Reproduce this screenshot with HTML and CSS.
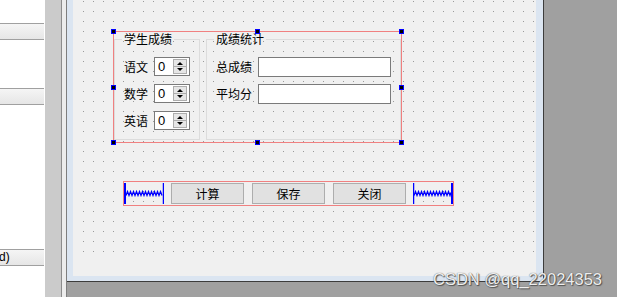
FILE: index.html
```html
<!DOCTYPE html>
<html>
	<head>
		<meta charset="UTF-8">
		<title>成绩窗体设计</title>
		<link rel="stylesheet" href="styles.css">
	</head>
	<body>
		<div class="side">
			<div class="side-bar bar-1"></div>
			<div class="side-bar bar-2"></div>
			<div class="side-bar bar-3">d)</div>
		</div>
		<div class="splitter"></div>
		<div class="scroll-edge"></div>
		<div class="mdi">
			<div class="subwindow">
				<div class="frame">
					<div class="form">
						<!-- 上面的水平布局: 两个分组框 -->
						<div class="layout layout-groups">
							<fieldset class="group group-scores">
								<legend>学生成绩</legend>
								<div class="row">
									<span class="label">语文</span>
									<span class="spin"><span class="spin-value">0</span><svg class="spin-btn" width="14" height="15" viewBox="0 0 14 15"><rect x="0.5" y="0.5" width="13" height="14" fill="#e6e6e6" stroke="#adadad"/><line x1="1" y1="7.5" x2="13" y2="7.5" stroke="#adadad"/><path d="M4 6 L7 3 L10 6 Z" fill="#000"/><path d="M4 9 L10 9 L7 12 Z" fill="#000"/></svg></span>
								</div>
								<div class="row">
									<span class="label">数学</span>
									<span class="spin"><span class="spin-value">0</span><svg class="spin-btn" width="14" height="15" viewBox="0 0 14 15"><rect x="0.5" y="0.5" width="13" height="14" fill="#e6e6e6" stroke="#adadad"/><line x1="1" y1="7.5" x2="13" y2="7.5" stroke="#adadad"/><path d="M4 6 L7 3 L10 6 Z" fill="#000"/><path d="M4 9 L10 9 L7 12 Z" fill="#000"/></svg></span>
								</div>
								<div class="row">
									<span class="label">英语</span>
									<span class="spin"><span class="spin-value">0</span><svg class="spin-btn" width="14" height="15" viewBox="0 0 14 15"><rect x="0.5" y="0.5" width="13" height="14" fill="#e6e6e6" stroke="#adadad"/><line x1="1" y1="7.5" x2="13" y2="7.5" stroke="#adadad"/><path d="M4 6 L7 3 L10 6 Z" fill="#000"/><path d="M4 9 L10 9 L7 12 Z" fill="#000"/></svg></span>
								</div>
							</fieldset>
							<fieldset class="group group-stats">
								<legend>成绩统计</legend>
								<div class="row row-edit">
									<span class="label label-wide">总成绩</span>
									<span class="edit"></span>
								</div>
								<div class="row row-edit">
									<span class="label label-wide">平均分</span>
									<span class="edit"></span>
								</div>
							</fieldset>
							<!-- 选中时的8个拖拽点 -->
							<span class="handle h-tl"></span>
							<span class="handle h-tm"></span>
							<span class="handle h-tr"></span>
							<span class="handle h-ml"></span>
							<span class="handle h-mr"></span>
							<span class="handle h-bl"></span>
							<span class="handle h-bm"></span>
							<span class="handle h-br"></span>
						</div>
						<!-- 下面的按钮布局 -->
						<div class="layout layout-buttons">
							<svg class="spacer" width="40" height="23" viewBox="0 0 40 23"><line x1="1" y1="1" x2="1" y2="22" stroke="#0000ff" stroke-width="2"/><line x1="39.5" y1="1" x2="39.5" y2="22" stroke="#0000ff" stroke-width="1.5"/><polyline points="2,13.5 3.5,9.5 5,13.5 6.5,9.5 8,13.5 9.5,9.5 11,13.5 12.5,9.5 14,13.5 15.5,9.5 17,13.5 18.5,9.5 20,13.5 21.5,9.5 23,13.5 24.5,9.5 26,13.5 27.5,9.5 29,13.5 30.5,9.5 32,13.5 33.5,9.5 35,13.5 36.5,9.5 38,13.5" fill="none" stroke="#0000ff" stroke-width="1.3"/></svg>
							<button class="btn btn-first">计算</button>
							<button class="btn">保存</button>
							<button class="btn">关闭</button>
							<svg class="spacer spacer-right" width="40" height="23" viewBox="0 0 40 23"><line x1="0.5" y1="1" x2="0.5" y2="22" stroke="#0000ff" stroke-width="1.5"/><line x1="39" y1="1" x2="39" y2="22" stroke="#0000ff" stroke-width="2"/><polyline points="1,13.5 2.5,9.5 4,13.5 5.5,9.5 7,13.5 8.5,9.5 10,13.5 11.5,9.5 13,13.5 14.5,9.5 16,13.5 17.5,9.5 19,13.5 20.5,9.5 22,13.5 23.5,9.5 25,13.5 26.5,9.5 28,13.5 29.5,9.5 31,13.5 32.5,9.5 34,13.5 35.5,9.5 37,13.5 38,10.5" fill="none" stroke="#0000ff" stroke-width="1.3"/></svg>
						</div>
					</div>
				</div>
			</div>
		</div>
		<div class="watermark">CSDN @qq_22024353</div>
	</body>
</html>
```

FILE: styles.css
```css
* {
	padding: 0;
	margin: 0;
	box-sizing: border-box;
}
html,body {
	height: 100%;
}
body {
	display: flex;
	height: 297px;
	overflow: hidden;
	background: #fff;
	font-family: "Noto Sans CJK SC", "Liberation Sans", sans-serif;
	font-size: 12px;
	color: #000;
}
/* 左边的属性面板 */
.side {
	width: 45px;
	flex-shrink: 0;
	background: #fff;
}
.side-bar {
	width: 44px;
	height: 17px;
	border-top: 1px solid #a0a0a0;
	border-bottom: 1px solid #a0a0a0;
	background: linear-gradient(#f5f5f5, #e6e6e6);
	font-family: "Liberation Sans", sans-serif;
	line-height: 15px;
	overflow: hidden;
}
.bar-1 {
	margin-top: 23px;
}
.bar-2 {
	margin-top: 48px;
}
.bar-3 {
	margin-top: 144px;
	text-indent: -1px;
}
.splitter {
	width: 16px;
	flex-shrink: 0;
	background: #cbcbcb;
}
.scroll-edge {
	width: 6px;
	flex-shrink: 0;
	border-left: 1px solid #8c8c8c;
	border-right: 1px solid #7e7e7e;
	background: #ececec;
}
.mdi {
	flex: 1;
	background: #a0a0a0;
}
.subwindow {
	width: 477px;
	height: 282px;
	border-right: 1px solid #3c3c3c;
	border-bottom: 1px solid #3c3c3c;
}
.frame {
	border-style: solid;
	border-color: #dbe5f1;
	border-width: 0 7px 5px 6px;
}
/* 设计器的网格点 */
.form {
	width: 463px;
	height: 276px;
	padding: 1px 2px 24px 10px;
	background: conic-gradient(at 1px 1px, transparent 270deg, #9a9a9a 0) 0 0 / 10px 10px content-box, #f0f0f0;
}
.layout {
	border: 1px solid #f08080;
}
.layout-groups {
	position: relative;
	display: flex;
	width: 289px;
	height: 112px;
	margin: 30px 0 0 30px;
}
.group {
	height: 108px;
	min-width: 0;
	border: 1px solid #dcdcdc;
	padding: 11px 0 0 9px;
}
.group legend {
	padding: 0 2px;
	margin-left: -2px;
	line-height: 14px;
}
.group-scores {
	width: 86px;
}
.group-stats {
	width: 195px;
	margin-left: 6px;
}
.row {
	display: flex;
	align-items: center;
	height: 19px;
	margin-bottom: 8px;
}
.row-edit {
	height: 20px;
	margin-bottom: 7px;
}
.label {
	width: 24px;
	margin-right: 6px;
	line-height: 14px;
}
.label-wide {
	width: 36px;
}
.spin {
	display: flex;
	align-items: center;
	width: 36px;
	height: 19px;
	border: 1px solid #7a7a7a;
	background: #fff;
}
.spin-value {
	flex: 1;
	padding-left: 3px;
	font-family: "Liberation Sans", sans-serif;
	font-size: 13px;
	line-height: 17px;
}
.spin-btn {
	display: block;
	margin-right: 2px;
}
.edit {
	width: 133px;
	height: 20px;
	border: 1px solid #7a7a7a;
	background: #fff;
}
.handle {
	position: absolute;
	width: 5px;
	height: 5px;
	border: 1px solid #0000ff;
	background: #000;
}
.h-tl { left: -3px; top: -3px; }
.h-tm { left: 141px; top: -3px; }
.h-tr { left: 285px; top: -3px; }
.h-ml { left: -3px; top: 53px; }
.h-mr { left: 285px; top: 53px; }
.h-bl { left: -3px; top: 108px; }
.h-bm { left: 141px; top: 108px; }
.h-br { left: 285px; top: 108px; }
.layout-buttons {
	display: flex;
	align-items: center;
	width: 331px;
	height: 25px;
	margin: 38px 0 0 40px;
}
.spacer {
	display: block;
	flex-shrink: 0;
}
.spacer-right {
	margin-left: 7px;
}
.btn {
	width: 73px;
	height: 21px;
	margin-left: 8px;
	border: 1px solid #adadad;
	background: #e1e1e1;
	font-family: "Noto Sans CJK SC", sans-serif;
	font-size: 12px;
	line-height: 19px;
	color: #000;
}
.btn-first {
	margin-left: 7px;
}
.watermark {
	position: absolute;
	left: 433px;
	top: 270px;
	font-family: "Liberation Sans", sans-serif;
	font-size: 16.5px;
	color: rgba(255, 255, 255, 0.92);
	text-shadow: 0 0 1px #444, 1px 1px 1px #555;
}
```
